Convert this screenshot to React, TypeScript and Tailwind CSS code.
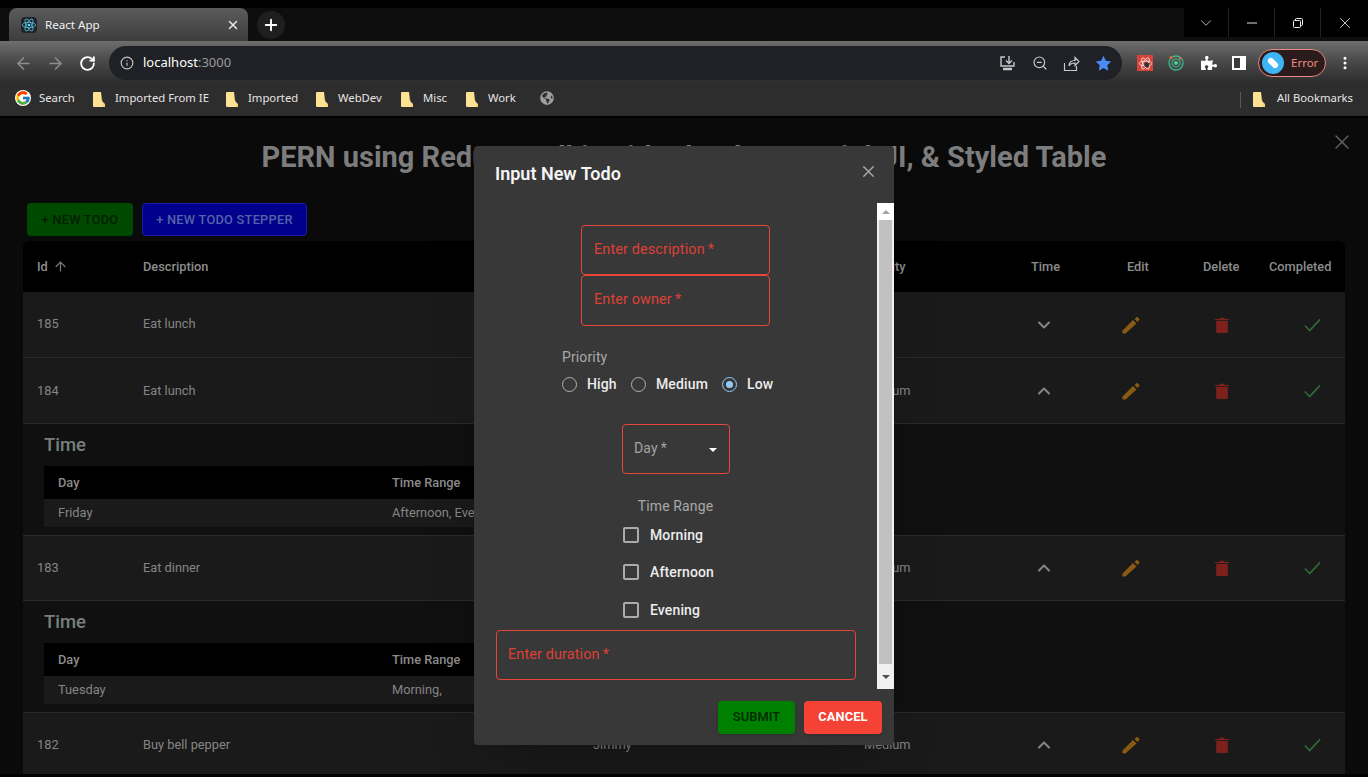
import { ArrowLeft, ArrowRight, ChevronDown, ChevronUp, Info, Minus, Plus, RotateCw, X, ZoomOut, ArrowUp, MoreVertical } from "lucide-react"
import { FaPuzzlePiece, FaGlobeAmericas } from "react-icons/fa"
import { FcGoogle } from "react-icons/fc"

const rowGrid = "grid grid-cols-[106px_450px_271px_149px_92px_96px_68px_90px]"

function FolderIcon() {
  return (
    <svg width="12" height="15" viewBox="0 0 12 15" className="shrink-0">
      <path d="M0 1a1 1 0 0 1 1-1h7l1 9 3 3v2a1 1 0 0 1-1 1H1a1 1 0 0 1-1-1z" fill="#fde293" />
      <path d="M8 0l1.5 11.5L12 12v3H10V13z" fill="#fbd467" />
    </svg>
  )
}

function ReactLogo() {
  return (
    <svg width="16" height="16" viewBox="-12 -12 24 24" className="rounded-sm bg-[#20232a]">
      <circle r="2" fill="#61dafb" />
      <g fill="none" stroke="#61dafb" strokeWidth="1">
        <ellipse rx="10" ry="4" />
        <ellipse rx="10" ry="4" transform="rotate(60)" />
        <ellipse rx="10" ry="4" transform="rotate(120)" />
      </g>
    </svg>
  )
}

function TabStrip() {
  return (
    <div className="flex h-[33px] bg-[#0e0e0e]">
      <div className="ml-[9px] flex h-[33px] w-[239px] items-center rounded-t-lg bg-gradient-to-b from-[#5c5c5c] to-[#3d3d3d] pl-3 pr-2">
        <ReactLogo />
        <span className="ml-2 flex-1 font-['Noto_Sans',sans-serif] text-[11.6px] text-[#f0f0f0]">React App</span>
        <X size={14} strokeWidth={2.5} className="text-[#e8e8e8]" />
      </div>
      <div className="ml-[9px] mt-[3px] flex h-7 w-7 items-center justify-center rounded-full bg-[#1f1f1f]">
        <Plus size={18} strokeWidth={2.5} className="text-white" />
      </div>
      <div className="ml-auto flex h-[29px] bg-black text-[#f0f0f0]">
        <div className="flex w-[45px] items-center justify-center border-r border-[#222]">
          <ChevronDown size={18} strokeWidth={1} />
        </div>
        <div className="flex w-[46px] items-center justify-center border-r border-[#222]">
          <Minus size={16} strokeWidth={1.4} />
        </div>
        <div className="flex w-[46px] items-center justify-center border-r border-[#222]">
          <svg width="12" height="12" viewBox="0 0 12 12" fill="none" stroke="currentColor">
            <rect x="1.5" y="3.5" width="7" height="7" rx="1" />
            <path d="M3.5 3V2a1 1 0 0 1 1-.5h5a1 1 0 0 1 1 1v5a1 1 0 0 1-1 1H9" />
          </svg>
        </div>
        <div className="flex w-[47px] items-center justify-center">
          <X size={18} strokeWidth={1.1} />
        </div>
      </div>
    </div>
  )
}

function Toolbar() {
  return (
    <div className="flex h-[42px] items-center bg-gradient-to-b from-[#6e6e6e] via-[#484848] to-[#2d2d2d] pt-[2px]">
      <ArrowLeft size={19} strokeWidth={2} className="ml-[14px] text-[#8d8d8d]" />
      <ArrowRight size={19} strokeWidth={2} className="ml-[13px] text-[#8d8d8d]" />
      <RotateCw size={17} strokeWidth={2.6} className="ml-[14px] text-white" />
      <div className="ml-[13px] flex h-[34px] w-[1013px] items-center rounded-full bg-[#1f2126] pl-[11px]">
        <Info size={14} className="text-[#c4c4c4]" />
        <span className="ml-[9px] font-['Noto_Sans',sans-serif] text-[13px] text-white">
          localhost<span className="text-[#9a9a9a]">:3000</span>
        </span>
        <div className="ml-auto flex items-center pr-[10px] text-[#c8c8c8]">
          <svg width="17" height="17" viewBox="0 0 17 17" fill="none" stroke="currentColor" strokeWidth="1.4">
            <path d="M6 2H2v9h13V7M10 1v7M7 5.5 10 8.5l3-3" />
            <path d="M4 14h9" strokeWidth="2.5" />
          </svg>
          <ZoomOut size={16} strokeWidth={1.8} className="ml-[16px]" />
          <svg width="17" height="17" viewBox="0 0 17 17" fill="none" stroke="currentColor" strokeWidth="1.2" className="ml-[15px]">
            <path d="M1.5 8v7.5h12V11M6 11c0-4 3-5.500 6-5.500V2.500L16 6.500l-4 4V8C9 8 7 9 6 11z" />
          </svg>
          <svg width="17" height="17" viewBox="0 0 24 24" fill="#4a8bf5" className="ml-[15px]">
            <path d="M12 1l3.300 7.200 7.700.9-5.700 5.300 1.500 7.700L12 18.300 5.200 22.100l1.500-7.700L1 9.100l7.700-.9z" />
          </svg>
        </div>
      </div>
      <div className="ml-[15px] flex h-4 w-4 items-center justify-center bg-[#d8443a]">
        <svg width="15" height="15" viewBox="-12 -12 24 24" fill="none" stroke="#f5e6e4" strokeWidth="1.3">
          <ellipse rx="10" ry="4" />
          <ellipse rx="10" ry="4" transform="rotate(60)" />
          <ellipse rx="10" ry="4" transform="rotate(120)" />
          <circle cx="2" cy="2" r="4" fill="#333" stroke="none" />
        </svg>
      </div>
      <svg width="16" height="16" viewBox="0 0 16 16" fill="none" className="ml-[15px]">
        <circle cx="8" cy="8" r="7" stroke="#3fb68b" strokeWidth="1.300" />
        <circle cx="8" cy="8" r="4" stroke="#3fb68b" strokeWidth="1.200" />
        <circle cx="8" cy="8" r="2" fill="#4cd08f" />
        <circle cx="3" cy="2.500" r="1.500" fill="#e8613c" />
        <circle cx="12" cy="3.500" r="1.200" fill="#e8613c" />
      </svg>
      <FaPuzzlePiece size={16} className="ml-[17px] text-white" />
      <div className="ml-[15px] flex h-[14px] w-[14px] border-2 border-white bg-white">
        <div className="h-full w-[6px] bg-[#3a3a3a]" />
      </div>
      <div className="ml-3 flex h-7 w-[68px] items-center rounded-full border border-[#e88a80] bg-[#2a1c1c] pl-[3px]">
        <div className="flex h-[22px] w-[22px] items-center justify-center rounded-full bg-[#3fb4f5]">
          <div className="h-[6px] w-3 rotate-45 rounded-sm bg-white" />
        </div>
        <span className="ml-[7px] font-['Noto_Sans',sans-serif] text-[11.5px] text-[#f28b82]">Error</span>
      </div>
      <MoreVertical size={16} strokeWidth={2.5} className="ml-[11px] text-white" />
    </div>
  )
}

function Bookmark({ label, className }: { label: string; className: string }) {
  return (
    <div className={`flex items-center ${className}`}>
      <FolderIcon />
      <span className="ml-[10px] pb-[3px]">{label}</span>
    </div>
  )
}

function BookmarksBar() {
  return (
    <div className="flex h-[33px] items-center bg-[#2d2d2d] font-['Noto_Sans',sans-serif] text-[11.3px] text-[#e6e6e6]">
      <FcGoogle size={16} className="mb-[3px] ml-[15px] rounded-full bg-white" />
      <span className="ml-2 w-[54px] pb-[3px]">Search</span>
      <Bookmark label="Imported From IE" className="w-[133px]" />
      <Bookmark label="Imported" className="w-[90px]" />
      <Bookmark label="WebDev" className="w-[85px]" />
      <Bookmark label="Misc" className="w-[65px]" />
      <Bookmark label="Work" className="w-[74px]" />
      <FaGlobeAmericas size={14} className="mb-[3px] text-[#9e9e9e]" />
      <div className="ml-auto flex items-center pr-[15px]">
        <div className="mr-[12px] h-[16px] w-px bg-[#5a5a5a]" />
        <FolderIcon />
        <span className="ml-[12px] pb-[3px]">All Bookmarks</span>
      </div>
    </div>
  )
}

function PencilIcon() {
  return (
    <svg width="18" height="18" viewBox="0 0 18 18" fill="#8a5a12">
      <path d="M0.500 14.500 L11 4 L14.500 7.500 L3.500 17.500 H1.200 Q0.300 17.500 0.400 16.500z" />
      <path d="M12.500 3 L15 0.800 L17.800 3.200 L15.500 6z" />
    </svg>
  )
}

function TrashIcon() {
  return (
    <svg width="14" height="16" viewBox="0 0 14 16" fill="#7e211d">
      <path d="M0 2h14v1.200H0z" />
      <path d="M4.500 1.200Q7 0 9.500 1.200V2h-5z" />
      <path d="M1.200 4h11.600v10.500q0 1.500-1.500 1.500H2.700q-1.500 0-1.500-1.500z" />
    </svg>
  )
}

function CheckIcon() {
  return (
    <svg width="17" height="14" viewBox="0 0 18 14" fill="none" stroke="#336b36" strokeWidth="1.700">
      <path d="M1 7.500 L6 13 L17 1" />
    </svg>
  )
}

function TodoRow({ id, description, owner, priority, open, className }: { id: number; description: string; owner: string; priority: string; open: boolean; className: string }) {
  return (
    <div className={`${rowGrid} items-center border-b border-[#2a2a2a] bg-[#1a1a1a] text-[12.8px] text-[#858585] ${className}`}>
      <div className="pl-[14px]">{id}</div>
      <div className="pl-[14px]">{description}</div>
      <div className="pl-[14px]">{owner}</div>
      <div className="pl-[14px]">{priority}</div>
      <div className="pl-[35px] text-[#858585]">
        {open ? <ChevronUp size={20} strokeWidth={2.4} /> : <ChevronDown size={20} strokeWidth={2.4} />}
      </div>
      <div className="pl-[31px]"><PencilIcon /></div>
      <div className="pl-[28px]"><TrashIcon /></div>
      <div className="pl-[49px]"><CheckIcon /></div>
    </div>
  )
}

function TimeDetails({ day, range }: { day: string; range: string }) {
  return (
    <div className="h-[112px] border-b border-[#2a2a2a] bg-[#101010] pl-[21px] pt-[8px] text-[12.8px]">
      <div className="h-[26px] text-[18.5px] font-medium leading-[26px] text-[#76807f]">Time</div>
      <div className="mt-[8px] w-[760px]">
        <div className="flex h-[33px] items-center bg-black font-medium text-[#8c8c8c]">
          <div className="w-[348px] pl-[14px]">Day</div>
          <div>Time Range</div>
        </div>
        <div className="flex h-[28px] items-center bg-[#1a1a1a] text-[#858585]">
          <div className="w-[348px] pl-[14px]">{day}</div>
          <div>{range}</div>
        </div>
      </div>
    </div>
  )
}

function TodoTable() {
  return (
    <div className="ml-[23px] mt-[5px] h-[533px] w-[1322px] overflow-hidden rounded-t-md">
      <div className={`${rowGrid} h-[51px] items-center bg-black text-[12.8px] font-medium text-[#8c8c8c]`}>
        <div className="flex items-center gap-[5px] pl-[14px]">
          Id <ArrowUp size={15} className="text-[#7a7a7a]" />
        </div>
        <div className="pl-[14px]">Description</div>
        <div className="pl-[14px]">Owner</div>
        <div className="pl-[14px]">Priority</div>
        <div className="pl-[32px]">Time</div>
        <div className="pl-[36px]">Edit</div>
        <div className="pl-[16px]">Delete</div>
        <div className="pl-[14px]">Completed</div>
      </div>
      <TodoRow id={185} description="Eat lunch" owner="Jimmy" priority="Low" open={false} className="h-[66px] [&>div:nth-child(-n+4)]:pb-[2px]" />
      <TodoRow id={184} description="Eat lunch" owner="Jimmy" priority="Medium" open className="h-[66px]" />
      <TimeDetails day="Friday" range="Afternoon, Evening" />
      <TodoRow id={183} description="Eat dinner" owner="Jimmy" priority="Medium" open className="h-[65px]" />
      <TimeDetails day="Tuesday" range="Morning," />
      <TodoRow id={182} description="Buy bell pepper" owner="Jimmy" priority="Medium" open className="h-[65px]" />
    </div>
  )
}

function Field({ label, className }: { label: string; className: string }) {
  return (
    <div className={`flex items-center rounded border border-[#e8463a] text-[14.4px] tracking-[0.00938em] text-[#df4036] ${className}`}>
      {label}
    </div>
  )
}

function Radio({ label, checked, className }: { label: string; checked?: boolean; className: string }) {
  return (
    <div className={`flex items-center ${className}`}>
      <div className={`flex h-[15px] w-[15px] items-center justify-center rounded-full border-[1.5px] ${checked ? "border-[#90caf9]" : "border-[#b0b0b0]"}`}>
        {checked && <div className="h-[7px] w-[7px] rounded-full bg-[#90caf9]" />}
      </div>
      <span className="ml-[10px] font-medium text-[#ececec]">{label}</span>
    </div>
  )
}

function CheckRow({ label, className }: { label: string; className: string }) {
  return (
    <div className={`flex h-6 items-center ${className}`}>
      <div className="h-4 w-4 rounded-[2px] border-2 border-[#ababab]" />
      <span className="ml-[11px] font-medium text-[#ececec]">{label}</span>
    </div>
  )
}

function ScrollBar() {
  return (
    <div className="flex h-[486px] w-[17px] shrink-0 flex-col bg-[#f1f1f1]">
      <div className="flex h-[17px] items-center justify-center bg-white">
        <div className="h-0 w-0 border-x-[4px] border-b-[4px] border-x-transparent border-b-[#a3a3a3]" />
      </div>
      <div className="mx-[2px] h-[444px] bg-[#c1c1c1]" />
      <div className="flex flex-1 items-center justify-center">
        <div className="h-0 w-0 border-x-[4px] border-t-[4px] border-x-transparent border-t-[#505050]" />
      </div>
    </div>
  )
}

function TodoModal() {
  return (
    <div className="absolute left-[474px] top-[146px] h-[599px] w-[420px] rounded bg-[#383838] shadow-2xl">
      <div className="flex h-[57px] items-start justify-between pl-[21px] pr-[16px] pt-[15px]">
        <h2 className="text-lg font-semibold leading-[26px] text-[#f5f5f5]">Input New Todo</h2>
        <X size={19} strokeWidth={1.7} className="mt-[1px] text-[#a8a8a8]" />
      </div>
      <div className="flex h-[486px] justify-between pl-[22px] pr-0 text-sm tracking-[0.00938em]">
        <div className="flex w-[360px] flex-col">
          <Field label={"Enter description\u2009*"} className="ml-[85px] mt-[22px] h-[50px] w-[189px] pl-3" />
          <Field label={"Enter owner\u2009*"} className="ml-[85px] h-[51px] w-[189px] pl-3" />
          <div className="ml-[66px] mt-[21px] leading-5 text-[#a8a8a8]">Priority</div>
          <div className="ml-[66px] mt-[5px] flex h-6">
            <Radio label="High" className="w-[69px]" />
            <Radio label="Medium" className="w-[91px]" />
            <Radio label="Low" checked className="w-[52px]" />
          </div>
          <div className="ml-[126px] mt-[28px] flex h-[50px] w-[108px] items-center justify-between rounded border border-[#e8463a] pb-[3px] pl-[11px] pr-[12px] text-[#a3a3a3]">
            {"Day\u2009*"}
            <div className="mt-[4px] h-0 w-0 border-x-[4px] border-t-[4px] border-x-transparent border-t-white" />
          </div>
          <div className="mt-[22px] pr-[1px] text-center leading-5 text-[#a8a8a8]">Time Range</div>
          <CheckRow label="Morning" className="ml-[127px] mt-[7px]" />
          <CheckRow label="Afternoon" className="ml-[127px] mt-[13px]" />
          <CheckRow label="Evening" className="ml-[127px] mt-[14px]" />
          <Field label={"Enter duration\u2009*"} className="mt-[8px] h-[50px] w-[360px] pl-[11px]" />
        </div>
        <ScrollBar />
      </div>
      <div className="flex justify-end gap-[9px] pr-3 pt-3">
        <button className="h-[33px] w-[77px] rounded bg-[#008000] pb-[2px] text-[12.8px] font-medium tracking-[0.01em] text-[#012801] shadow-md">SUBMIT</button>
        <button className="h-[33px] w-[78px] rounded bg-[#f44336] pb-[2px] text-[12.8px] font-bold tracking-[0.01em] text-white shadow-md">CANCEL</button>
      </div>
    </div>
  )
}

export default function App() {
  return (
    <div className="relative h-[777px] w-[1368px] overflow-hidden bg-black pt-2 font-['Roboto',sans-serif]">
      <TabStrip />
      <Toolbar />
      <BookmarksBar />
      <div className="mt-[2px] h-[656px] bg-[#0a0a0a]">
        <h1 className="pt-[20px] text-center text-[29px] font-bold leading-[38px] text-[#7d7d7d]">
          PERN using Redux Toolkit with Thunk, Material UI, &amp; Styled Table
        </h1>
        <div className="ml-[27px] mt-[27px] flex h-[33px] gap-[9px] text-[12.8px] font-medium tracking-[0.02em]">
          <button className="w-[106px] rounded bg-[#004a00] text-[#011f01]">+ NEW TODO</button>
          <button className="w-[165px] rounded border border-[#1c1ca8] bg-[#00008c] text-[#5463a8]">+ NEW TODO STEPPER</button>
        </div>
        <TodoTable />
      </div>
      <X size={24} strokeWidth={1.5} className="absolute left-[1330px] top-[130px] text-[#5f5f5f]" />
      <TodoModal />
    </div>
  )
}
